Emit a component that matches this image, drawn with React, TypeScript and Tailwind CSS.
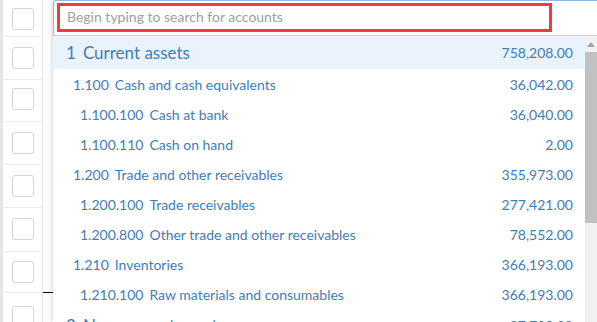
import React from "react";

type Row = { code: string; name: string; amount: string; level: 1 | 2 | 3 };

const rows: Row[] = [
  { code: "1", name: "Current assets", amount: "758,208.00", level: 1 },
  { code: "1.100", name: "Cash and cash equivalents", amount: "36,042.00", level: 2 },
  { code: "1.100.100", name: "Cash at bank", amount: "36,040.00", level: 3 },
  { code: "1.100.110", name: "Cash on hand", amount: "2.00", level: 3 },
  { code: "1.200", name: "Trade and other receivables", amount: "355,973.00", level: 2 },
  { code: "1.200.100", name: "Trade receivables", amount: "277,421.00", level: 3 },
  { code: "1.200.800", name: "Other trade and other receivables", amount: "78,552.00", level: 3 },
  { code: "1.210", name: "Inventories", amount: "366,193.00", level: 2 },
  { code: "1.210.100", name: "Raw materials and consumables", amount: "366,193.00", level: 3 },
  { code: "2", name: "Non-current assets", amount: "97,700.00", level: 1 },
];

const bgRows = [
  { h: "h-[37px]", pt: "pt-[8px]" },
  { h: "h-[43px]", pt: "pt-[10px]" },
  { h: "h-[42px]", pt: "pt-[8px]" },
  { h: "h-[43px]", pt: "pt-[10px]" },
  { h: "h-[43px]", pt: "pt-[10px]" },
  { h: "h-[44px]", pt: "pt-[10px]" },
  { h: "h-[41px]", pt: "pt-[9px]" },
  { h: "h-[43px]", pt: "pt-[13px]" },
];

function ListRow({ r, active }: { r: Row; active?: boolean }) {
  if (r.level === 1) {
    return (
      <div
        className={`flex h-[33px] shrink-0 items-center justify-between pl-[13px] pr-[12px] ${
          active ? "bg-[#eaf3fb]" : ""
        }`}
      >
        <span className="text-[17px] text-[#3f7db8]">
          <span className="mr-[7px]">{r.code}</span>
          {r.name}
        </span>
        <span className="text-[14px] text-[#3f7db8]">{r.amount}</span>
      </div>
    );
  }
  return (
    <div
      className={`flex h-[30px] shrink-0 items-center justify-between pr-[12px] text-[14px] text-[#3f7db8] ${
        r.level === 2 ? "pl-[20px]" : "pl-[27px]"
      }`}
    >
      <span>
        <span className="mr-[6px]">{r.code}</span>
        {r.name}
      </span>
      <span>{r.amount}</span>
    </div>
  );
}

export default function App() {
  return (
    <div
      className="relative h-[322px] w-[597px] overflow-hidden bg-white"
      style={{ fontFamily: "Lato, 'Open Sans', sans-serif" }}
    >
      {/* background table */}
      <div className="flex h-full">
        <div className="h-full w-[3px] bg-[#e6e6e6]" />
        <div className="flex w-[40px] flex-col border-r border-[#e6e6e6]">
          {bgRows.map((b, i) => (
            <div
              key={i}
              className={`${b.h} ${b.pt} flex shrink-0 justify-center border-b border-[#ececec]`}
            >
              <div className="h-[22px] w-[22px] rounded-[3px] border border-[#d4d4d4] bg-white" />
            </div>
          ))}
        </div>
        <div className="flex w-[10px] flex-col">
          <div className="mt-[292px] h-px bg-black" />
        </div>
      </div>

      {/* dropdown */}
      <div className="absolute left-[53px] top-0 flex h-[322px] w-[544px] flex-col bg-white shadow-[-2px_0_4px_rgba(0,0,0,0.12)]">
        <div className="relative h-[36px] shrink-0 rounded-tl-[3px] border-l border-t border-b border-l-[#8fb9e2] border-t-[#8fb9e2] border-b-[#cfcfcf] bg-white">
          <div className="absolute left-[3px] top-[2px] flex h-[29px] w-[495px] items-center border-[3px] border-[#f23a3f] pb-[2px] pl-[7px]">
            <span className="text-[14px] text-[#a0a0a0]">Begin typing to search for accounts</span>
          </div>
        </div>
        <div className="flex min-h-0 flex-1">
          <div className="flex flex-1 flex-col overflow-hidden">
            {rows.map((r, i) => (
              <ListRow key={i} r={r} active={i === 0} />
            ))}
          </div>
          <div className="flex w-[12px] flex-col bg-[#f1f1f1]">
            <div className="flex h-[16px] items-center justify-center">
              <svg width="8" height="5" viewBox="0 0 8 5">
                <path d="M0 5 L4 0 L8 5 Z" fill="#a3a3a3" />
              </svg>
            </div>
            <div className="h-[171px] bg-[#c1c1c1]" />
          </div>
        </div>
      </div>
    </div>
  );
}
